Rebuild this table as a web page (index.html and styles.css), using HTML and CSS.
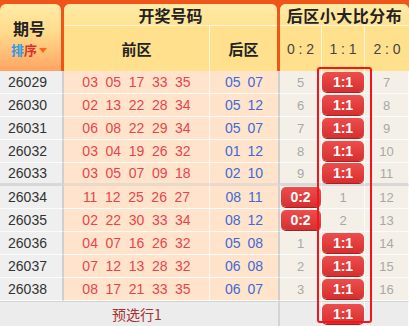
FILE: index.html
```html
<!DOCTYPE html>
<html lang="zh">
<head>
<meta charset="utf-8">
<link rel="stylesheet" href="styles.css">
</head>
<body>
<div class="board">
  <div class="head">
    <div class="h-no">
      <div class="h-no-title">期号</div>
      <div class="sort"><span class="s1">排</span><span class="s2">序</span><span class="tri"></span></div>
    </div>
    <div class="h-group">
      <div class="h-title">开奖号码</div>
      <div class="h-sub h-sub-draw">
        <div class="h-cell">前区</div>
        <div class="h-cell">后区</div>
      </div>
    </div>
    <div class="h-group h-group-last">
      <div class="h-title">后区小大比分布</div>
      <div class="h-sub h-sub-ratio">
        <div class="h-cell h-ratio">0 : 2</div>
        <div class="h-cell h-ratio">1 : 1</div>
        <div class="h-cell h-ratio">2 : 0</div>
      </div>
    </div>
  </div>

  <div class="body">
    <div class="row"><div class="c-no">26029</div><div class="c-front"><span>03</span><span>05</span><span>17</span><span>33</span><span>35</span></div><div class="c-back"><span>05</span><span>07</span></div><div class="c-r">5</div><div class="c-r"><span class="pill">1:1</span></div><div class="c-r">7</div></div>
    <div class="row"><div class="c-no">26030</div><div class="c-front"><span>02</span><span>13</span><span>22</span><span>28</span><span>34</span></div><div class="c-back"><span>05</span><span>12</span></div><div class="c-r">6</div><div class="c-r"><span class="pill">1:1</span></div><div class="c-r">8</div></div>
    <div class="row"><div class="c-no">26031</div><div class="c-front"><span>06</span><span>08</span><span>22</span><span>29</span><span>34</span></div><div class="c-back"><span>05</span><span>07</span></div><div class="c-r">7</div><div class="c-r"><span class="pill">1:1</span></div><div class="c-r">9</div></div>
    <div class="row"><div class="c-no">26032</div><div class="c-front"><span>03</span><span>04</span><span>19</span><span>26</span><span>32</span></div><div class="c-back"><span>01</span><span>12</span></div><div class="c-r">8</div><div class="c-r"><span class="pill">1:1</span></div><div class="c-r">10</div></div>
    <div class="row row-sep"><div class="c-no">26033</div><div class="c-front"><span>03</span><span>05</span><span>07</span><span>09</span><span>18</span></div><div class="c-back"><span>02</span><span>10</span></div><div class="c-r">9</div><div class="c-r"><span class="pill">1:1</span></div><div class="c-r">11</div></div>
    <div class="row"><div class="c-no">26034</div><div class="c-front"><span>11</span><span>12</span><span>25</span><span>26</span><span>27</span></div><div class="c-back"><span>08</span><span>11</span></div><div class="c-r"><span class="pill pill-sm">0:2</span></div><div class="c-r">1</div><div class="c-r">12</div></div>
    <div class="row"><div class="c-no">26035</div><div class="c-front"><span>02</span><span>22</span><span>30</span><span>33</span><span>34</span></div><div class="c-back"><span>08</span><span>12</span></div><div class="c-r"><span class="pill pill-sm">0:2</span></div><div class="c-r">2</div><div class="c-r">13</div></div>
    <div class="row"><div class="c-no">26036</div><div class="c-front"><span>04</span><span>07</span><span>16</span><span>26</span><span>32</span></div><div class="c-back"><span>05</span><span>08</span></div><div class="c-r">1</div><div class="c-r"><span class="pill">1:1</span></div><div class="c-r">14</div></div>
    <div class="row"><div class="c-no">26037</div><div class="c-front"><span>07</span><span>12</span><span>13</span><span>28</span><span>32</span></div><div class="c-back"><span>06</span><span>08</span></div><div class="c-r">2</div><div class="c-r"><span class="pill">1:1</span></div><div class="c-r">15</div></div>
    <div class="row"><div class="c-no">26038</div><div class="c-front"><span>08</span><span>17</span><span>21</span><span>33</span><span>35</span></div><div class="c-back"><span>06</span><span>07</span></div><div class="c-r">3</div><div class="c-r"><span class="pill">1:1</span></div><div class="c-r">16</div></div>
    <div class="row foot"><div class="f-no"></div><div class="f-front">预选行1</div><div class="f-back"></div><div class="f-r"></div><div class="f-r"><span class="pill">1:1</span></div><div class="f-r"></div></div>
  </div>

  <div class="trend-box"></div>
</div>
</body>
</html>
```

FILE: styles.css
```css
* { box-sizing: border-box; margin: 0; padding: 0; }
html, body { width: 409px; height: 326px; overflow: hidden; background: #eeeeee; }
body { font-family: "Liberation Sans", "Noto Sans CJK SC", sans-serif; font-size: 14px; }

.board { position: relative; width: 409px; height: 326px; background: #ededed; }

/* header */
.head {
  display: grid;
  grid-template-columns: 61px 213px 129px;
  column-gap: 3px;
  height: 71px;
  padding-top: 4px;
  background: #ef5419;
}
.h-no {
  border-radius: 6px 6px 0 0;
  background: linear-gradient(#ffeca6 0%, #ffd98a 45%, #ffa462 100%);
  display: flex;
  flex-direction: column;
  align-items: center;
  padding-top: 14px;
  padding-right: 3px;
}
.h-no-title {
  font-family: "Noto Sans CJK SC", sans-serif;
  font-weight: 700;
  font-size: 16px;
  line-height: 20px;
  height: 20px;
  color: #222;
}
.sort {
  display: flex;
  align-items: center;
  font-family: "Noto Sans CJK SC", sans-serif;
  font-weight: 700;
  font-size: 13px;
  line-height: 16px;
  height: 16px;
  margin-top: 4px;
}
.s1 { color: #2d9ae6; }
.s2 { color: #d8342c; }
.tri {
  width: 0; height: 0;
  margin-left: 2px;
  border-left: 4px solid transparent;
  border-right: 4px solid transparent;
  border-top: 5px solid #f26a1e;
}
.h-group {
  border-radius: 6px 6px 0 0;
  background: #ffe596;
  display: flex;
  flex-direction: column;
}
.h-title {
  height: 22px;
  flex: none;
  display: flex;
  align-items: center;
  justify-content: center;
  border-bottom: 1px solid #fff6dc;
  border-radius: 6px 6px 0 0;
  font-family: "Noto Sans CJK SC", sans-serif;
  font-weight: 700;
  font-size: 16px;
  line-height: 18px;
  color: #222;
  background: linear-gradient(#ffeaa6, #ffe392);
}
.h-group-last .h-title { letter-spacing: 0.5px; }
.h-sub { flex: 1; display: grid; background: #ffe08c; }
.h-sub-draw { grid-template-columns: 146px 67px; }
.h-sub-ratio { grid-template-columns: 42px 43px 44px; }
.h-cell {
  display: flex;
  align-items: center;
  justify-content: center;
  border-right: 1px solid #fff6dc;
  font-family: "Noto Sans CJK SC", sans-serif;
  font-weight: 700;
  font-size: 15px;
  line-height: 18px;
  color: #222;
}
.h-cell:last-child { border-right: 0; }
.h-ratio {
  font-family: "Liberation Sans", sans-serif;
  font-weight: 400;
  font-size: 14px;
  color: #444;
}

/* body */
.row {
  display: grid;
  grid-template-columns: 64px 146px 70px 42px 43px 44px;
  height: 23px;
}
.row > div {
  display: flex;
  align-items: center;
  justify-content: center;
  border-bottom: 1px solid #fbfbfb;
}
.c-no {
  background: #efefef;
  color: #333;
  border-right: 2px solid #cfcfcf;
  padding-right: 7px;
  font-size: 14px;
}
.c-front {
  background: #ffe4cb;
  border-right: 1px solid #fff5ec;
  color: #e9434b;
  gap: 7.6px;
}
.c-back {
  background: #ffe4cb;
  border-right: 2px solid #cfcfcf;
  color: #3c6bd6;
  gap: 7px;
}
.c-r {
  background: #f4f0e7;
  border-right: 1px solid #fbfbfb;
  color: #a8a8a8;
  font-size: 13px;
}
.row-sep > div { border-bottom: 3px solid #d8d8d8; }
.row-sep > .c-front, .row-sep > .c-back { border-bottom-color: #e9d9cc; }

.pill {
  display: flex;
  align-items: center;
  justify-content: center;
  width: 42px;
  height: 20px;
  border-radius: 5px;
  background: linear-gradient(#ee4d4d, #d5302f);
  box-shadow: 0 1px 0 #a82020;
  color: #fff;
  font-size: 14px;
  font-weight: 700;
}
.pill-sm { width: 40px; }

.foot { height: 25px; }
.foot > div {
  background: #ececec;
  border-top: 1px solid #d4d4d4;
  border-bottom: 0;
}
.row.foot > div { border-bottom: 0; }
.f-front {
  font-family: "Noto Sans CJK SC", sans-serif;
  color: #a8302e;
  font-size: 14px;
  line-height: 18px;
}
.f-back { border-right: 2px solid #d4d4d4; }
.f-r { border-right: 1px solid #fbfbfb; }

/* overlay: trend connector box around the 1:1 column */
.trend-box {
  position: absolute;
  left: 317px;
  top: 67px;
  width: 55px;
  height: 256px;
  border: 2px solid #f4141a;
  border-radius: 3px;
  pointer-events: none;
}
```
